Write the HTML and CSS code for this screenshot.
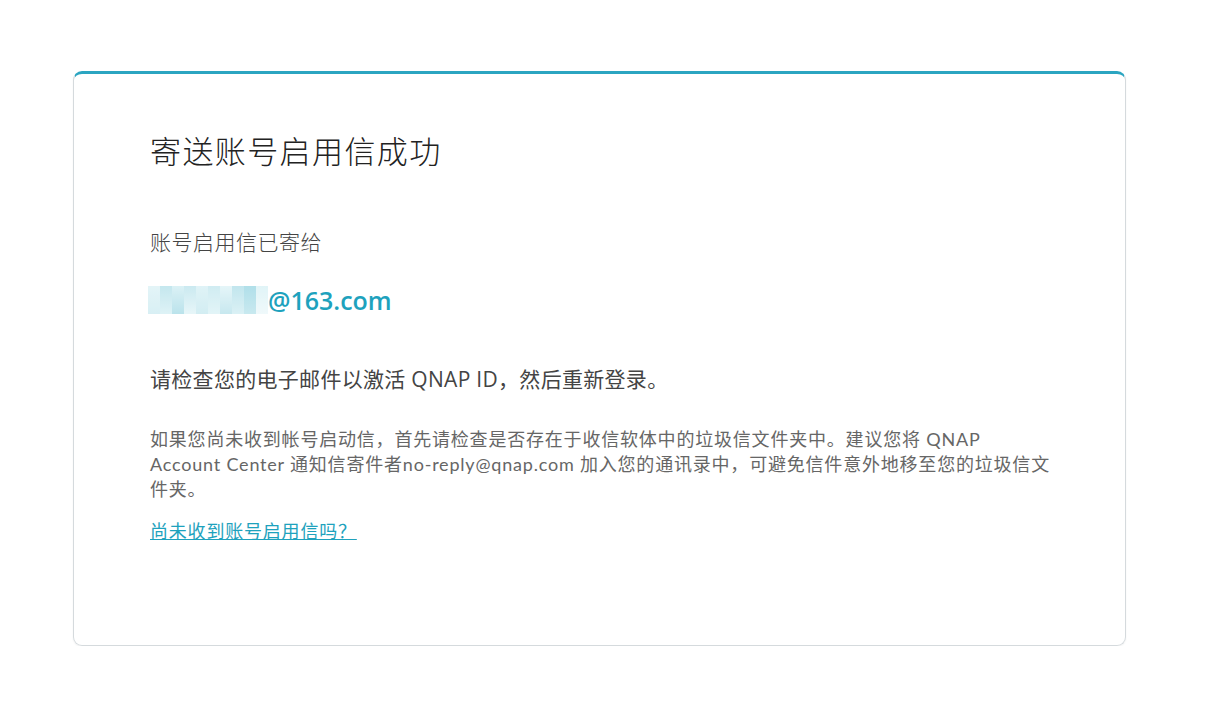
FILE: index.html
```html
<!DOCTYPE html>
<html lang="zh-CN">
<head>
<meta charset="utf-8">
<title>寄送账号启用信成功</title>
<link rel="stylesheet" href="styles.css">
</head>
<body>
<main class="page">
  <section class="card">
    <h1 class="title">寄送账号启用信成功</h1>
    <p class="sent-to">账号启用信已寄给</p>
    <p class="email"><span class="blur" aria-hidden="true"><i class="b1"></i><i class="b2"></i><i class="b3"></i><i class="b4"></i><i class="b5"></i><i class="b6"></i><i class="b7"></i><i class="b8"></i><i class="b9"></i><i class="b10"></i></span>@163.com</p>
    <p class="check">请检查您的电子邮件以激活 QNAP ID，然后重新登录。</p>
    <p class="note">如果您尚未收到帐号启动信，首先请检查是否存在于收信软体中的垃圾信文件夹中。建议您将 QNAP Account Center 通知信寄件者no-reply@qnap.com 加入您的通讯录中，可避免信件意外地移至您的垃圾信文件夹。</p>
    <a class="resend" href="#">尚未收到账号启用信吗？</a>
  </section>
</main>
</body>
</html>
```
FILE: styles.css
```css
html, body {
  margin: 0;
  padding: 0;
  background: #ffffff;
}
body {
  font-family: "Open Sans", "Noto Sans CJK SC", sans-serif;
  color: #333;
  text-spacing-trim: space-all;
}
.page {
  padding: 71px 95px 0 73px;
}
.card {
  box-sizing: border-box;
  width: 1053px;
  height: 575px;
  border: 1px solid #d5dadd;
  border-top: 3px solid #2ba5c1;
  border-radius: 9px;
  padding: 52px 76px 0 76px;
  box-shadow: 0 1px 2px rgba(0,0,0,0.06);
}
.title {
  margin: 0;
  font-size: 31px;
  font-weight: 300;
  color: #222;
  line-height: 50px;
  letter-spacing: 1.4px;
}
.sent-to {
  margin: 51px 0 0 0;
  font-size: 21px;
  font-weight: 300;
  color: #444;
  line-height: 30px;
  letter-spacing: 0.5px;
}
.email {
  margin: 26px 0 0 0;
  font-size: 25px;
  font-weight: 600;
  color: #1ea2bd;
  line-height: 34px;
  display: flex;
  align-items: center;
}
.blur {
  display: inline-grid;
  grid-template-columns: repeat(10, 12px);
  height: 28px;
  margin-left: -2px;
  margin-right: 0;
  opacity: 0.6;
}
.blur i { display: block; height: 100%; }
.b1 { background: linear-gradient(#d2eef3, #bfe6ee); }
.b2 { background: linear-gradient(#9fd8e4, #c9ebf1); }
.b3 { background: linear-gradient(#c4e9f0, #8ed1df); }
.b4 { background: linear-gradient(#a9dce7, #d8f1f5); }
.b5 { background: linear-gradient(#cbecf2, #b6e2eb); }
.b6 { background: linear-gradient(#b2e0ea, #d0eef3); }
.b7 { background: linear-gradient(#d5f0f5, #a3d9e5); }
.b8 { background: linear-gradient(#9ad6e3, #c3e8ef); }
.b9 { background: linear-gradient(#7dcbdc, #a5dbe6); }
.b10 { background: linear-gradient(#cdeef3, #e6f6f9); }
.check {
  margin: 47px 0 0 0;
  font-size: 21px;
  font-weight: 400;
  color: #444;
  line-height: 30px;
  letter-spacing: 0.3px;
}
.note {
  margin: 33px 0 0 0;
  width: 905px;
  font-family: "Lato", "Noto Sans CJK SC", sans-serif;
  font-size: 18px;
  color: #666;
  line-height: 25px;
  letter-spacing: 0.8px;
}
.resend {
  display: inline-block;
  margin-top: 17px;
  font-family: "Lato", "Noto Sans CJK SC", sans-serif;
  font-size: 18px;
  line-height: 24px;
  color: #1ea2bd;
  text-decoration: underline;
  letter-spacing: 0.8px;
}
```
